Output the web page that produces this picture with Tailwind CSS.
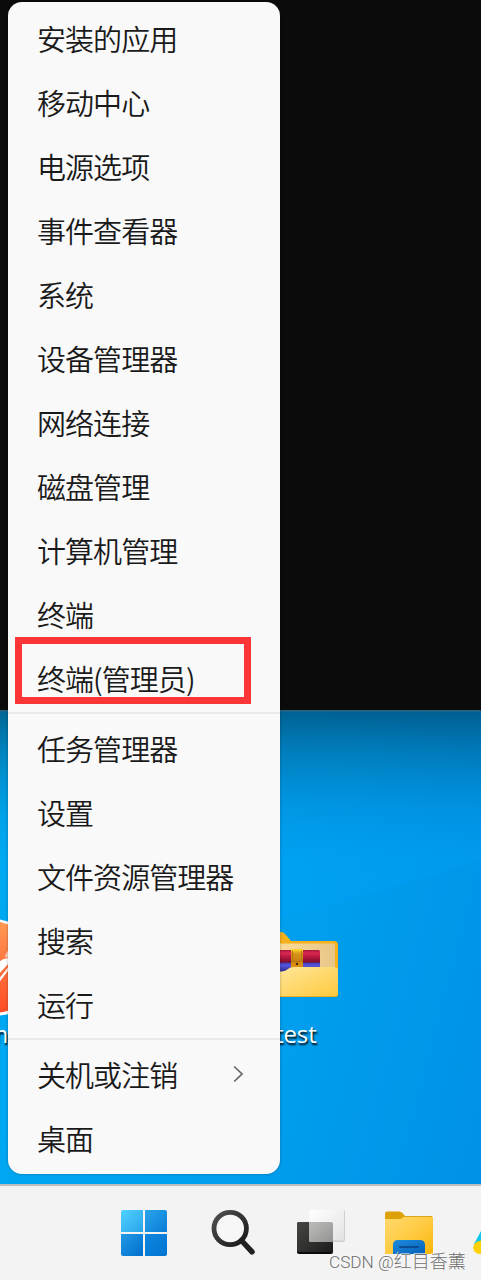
<!DOCTYPE html>
<html lang="zh-CN">
<head>
<meta charset="utf-8">
<title>桌面</title>
<script src="https://cdn.jsdelivr.net/npm/@tailwindcss/browser@4"></script>
</head>
<body class="relative flex h-[1280px] w-[481px] flex-col overflow-hidden bg-[#0b0b0b] font-['Open_Sans','Noto_Sans_CJK_SC',sans-serif]">
<div class="h-[710px] shrink-0 bg-[#0b0b0b]"></div>
<main class="relative h-[474px] shrink-0 overflow-hidden bg-linear-[105deg] from-[#00aaf3] via-[#009fee] via-60% to-[#0091e6]">
  <svg class="absolute inset-0" width="481" height="474" viewBox="0 0 481 474">
    <defs>
      <linearGradient id="shade" x1="0" y1="0" x2="0" y2="1"><stop stop-color="#002c43" stop-opacity=".55"/><stop offset=".28" stop-color="#003a54" stop-opacity=".33"/><stop offset=".65" stop-color="#00547c" stop-opacity=".12"/><stop offset="1" stop-color="#0078b0" stop-opacity="0"/></linearGradient>
      <linearGradient id="beam" x1="0" y1="0" x2="0" y2="1"><stop stop-color="#009cf4" stop-opacity=".2"/><stop offset="1" stop-color="#00a0f8" stop-opacity=".4"/></linearGradient>
      <linearGradient id="orange" x1="0" y1="0" x2="0" y2="1"><stop stop-color="#ff9b55"/><stop offset="1" stop-color="#ff4b25"/></linearGradient>
      <linearGradient id="fold" x1="0" y1="0" x2="1" y2="1"><stop stop-color="#ffe8a0"/><stop offset="1" stop-color="#ffc93c"/></linearGradient>
      <linearGradient id="back" x1="0" y1="0" x2="1" y2="0"><stop stop-color="#ffe09a"/><stop offset="1" stop-color="#e8c589"/></linearGradient>
      <linearGradient id="red" x1="0" y1="0" x2="0" y2="1"><stop stop-color="#a5163e"/><stop offset=".25" stop-color="#dc2950"/><stop offset=".55" stop-color="#b81840"/><stop offset="1" stop-color="#7c0b2b"/></linearGradient>
      <linearGradient id="violet" x1="0" y1="0" x2="0" y2="1"><stop stop-color="#3a2a8f"/><stop offset=".4" stop-color="#5555dd"/><stop offset="1" stop-color="#2c2a8a"/></linearGradient>
      <linearGradient id="gold" x1="0" y1="0" x2="0" y2="1"><stop stop-color="#ffdc2a"/><stop offset=".25" stop-color="#d9941c"/><stop offset=".6" stop-color="#c88212"/><stop offset="1" stop-color="#e9960c"/></linearGradient>
    </defs>
    <path d="M270 0H481V149Q380 184 270 210Z" fill="url(#beam)"/>
    <rect width="481" height="150" fill="url(#shade)"/>
    <rect width="481" height="2" fill="#1f6386"/>
    <path d="M-10 207Q-1 209 10 212V304Q0 305-10 308Z" fill="#fff"/>
    <path d="M-10 209Q0 212 10 215V300Q0 303-10 304Z" fill="url(#orange)"/>
    <path d="M-3 254Q2 248 10 248V252L-3 266ZM-2 270L10 255V258L-2 274Z" fill="#fff"/>
    <path d="M5 247Q6 242 9 240V248Z" fill="#ffd0b8"/>
    <path d="M270 222H281Q284 222 286 225L291 231H334Q338 231 338 235V280H270Z" fill="#f5b01c"/>
    <rect x="270" y="233.500" width="65" height="30" rx="1.500" fill="url(#back)"/>
    <rect x="270" y="251" width="50" height="11" fill="url(#violet)"/>
    <rect x="270" y="240" width="50" height="12.500" rx="1.500" fill="url(#red)"/>
    <rect x="291" y="239" width="12" height="19" fill="url(#gold)"/>
    <path d="M292.500 241V251M301.500 241V251M291 251.500H303" stroke="#b5780f" fill="none"/><circle cx="297" cy="254" r="1.200" fill="#472a08"/>
    <path d="M270 261.500H281Q285 261.500 288 259Q290 257 294 257H334Q338 257 338 260V284Q338 287 335 287H270Z" fill="url(#fold)"/>
    <path d="M270 286.500H335Q338 286.500 338 284" fill="none" stroke="#f0ab25"/>
  </svg>
  <span class="absolute -left-[14px] top-[308px] text-[24px] leading-[32px] text-white [text-shadow:1px_2px_2px_#000]">m</span>
  <span class="absolute left-[275px] top-[308px] text-[24px] leading-[32px] tracking-[-0.1px] text-white [text-shadow:1px_2px_2px_#000]">test</span>
</main>
<footer class="relative h-24 shrink-0 border-t-2 border-[#bdbdbd] bg-[#f3f3f3]">
  <svg width="481" height="94" viewBox="0 1186 481 94">
    <defs>
      <linearGradient id="win" x1="0" y1="0" x2="1" y2="1"><stop stop-color="#50d2ff"/><stop offset="1" stop-color="#28a4ea"/></linearGradient>
      <linearGradient id="win2" x1="0" y1="0" x2="1" y2="1"><stop stop-color="#2aa5eb"/><stop offset="1" stop-color="#0a7bd7"/></linearGradient>
      <linearGradient id="win3" x1="0" y1="0" x2="1" y2="1"><stop stop-color="#2299e4"/><stop offset="1" stop-color="#006fce"/></linearGradient>
      <linearGradient id="win4" x1="0" y1="0" x2="1" y2="1"><stop stop-color="#1086dd"/><stop offset="1" stop-color="#0074d2"/></linearGradient>
      <linearGradient id="lens" x1="0" y1="0" x2="1" y2="1"><stop stop-color="#505050"/><stop offset="1" stop-color="#181818"/></linearGradient>
      <linearGradient id="dark" x1="0" y1="0" x2="1" y2="1"><stop stop-color="#464644"/><stop offset="1" stop-color="#1d1d1d"/></linearGradient>
      <linearGradient id="light" x1="0" y1="0" x2="1" y2="1"><stop stop-color="#fff"/><stop offset="1" stop-color="#e2e2e2"/></linearGradient>
      <linearGradient id="mix" x1="0" y1="0" x2="1" y2="1"><stop stop-color="#bdbdbb"/><stop offset="1" stop-color="#929292"/></linearGradient>
      <linearGradient id="yellow" x1="0" y1="0" x2="1" y2="1"><stop stop-color="#ffdb70"/><stop offset=".5" stop-color="#ffcb43"/><stop offset="1" stop-color="#f9b60b"/></linearGradient>
      <linearGradient id="blue" x1="0" y1="0" x2="1" y2="1"><stop stop-color="#1d8bdd"/><stop offset="1" stop-color="#0561b8"/></linearGradient>
    </defs>
    <path d="M123 1210H143V1232H121V1212Q121 1210 123 1210Z" fill="url(#win)"/>
    <path d="M145 1210H165Q167 1210 167 1212V1232H145Z" fill="url(#win2)"/>
    <path d="M121 1234H143V1256H123Q121 1256 121 1254Z" fill="url(#win3)"/>
    <path d="M145 1234H167V1254Q167 1256 165 1256H145Z" fill="url(#win4)"/>
    <circle cx="230.200" cy="1228.500" r="16.200" fill="#f7f7f7" stroke="url(#lens)" stroke-width="4.800"/>
    <path d="M241.500 1240.500L252 1251.800" stroke="#202020" stroke-width="5.500" stroke-linecap="round"/>
    <rect x="297" y="1222" width="36" height="32" rx="2" fill="#0a0a0a"/>
    <rect x="297" y="1222" width="36" height="30" rx="2" fill="url(#dark)"/>
    <rect x="309" y="1210" width="36" height="32" rx="2" fill="#cfcfcf"/>
    <rect x="309" y="1210" width="35" height="30.500" rx="1.500" fill="url(#light)"/>
    <path d="M309 1222H331Q333 1222 333 1224V1242H311Q309 1242 309 1240Z" fill="url(#mix)"/>
    <path d="M385 1213.500Q385 1211.500 387 1211.500H399Q401 1211.500 402.500 1213L405 1216V1222H385Z" fill="#dda006"/>
    <path d="M385 1219H399Q401 1219 403 1217.500L404 1216.500Q405 1216 407 1216H431Q433 1216 433 1218V1254H385Z" fill="url(#yellow)"/>
    <path d="M404 1216.500H432" stroke="#dda51a"/>
    <path d="M393 1254V1245Q393 1240 398 1240H420Q425 1240 425 1245V1254Z" fill="url(#blue)"/>
    <path d="M400 1247H418" stroke="#0b4c94" stroke-width="2" stroke-linecap="round"/>
    <path d="M481 1231L474 1244L478 1250H481Z" fill="#10c5ec"/>
    <path d="M481 1240.500Q473 1242 473 1248Q474 1254 481 1254Z" fill="#ffd00a"/>
  </svg>
  <span class="absolute left-[329px] top-[64px] whitespace-nowrap font-['Roboto','Noto_Sans_CJK_SC',sans-serif] text-[17.200px] font-light leading-6 text-[#6f6f6f] [text-shadow:-1px_-1px_0_#ffffffaa]">CSDN @<span class="text-[18px]">红目香薰</span></span>
</footer>

<nav class="absolute left-2 top-[2px] flex h-[1172px] w-[272px] flex-col rounded-[14px] bg-[#f9f9f9] pt-[4px] font-['Noto_Sans_CJK_SC',sans-serif] text-[29px] font-[350] leading-[64px] tracking-[-0.95px] text-[#1a1a1a] shadow-[0_0_3px_#00000050] *:shrink-0">
  <div class="h-16 pl-[29px]">安装的应用</div>
  <div class="h-16 pl-[29px]">移动中心</div>
  <div class="h-16 pl-[29px]">电源选项</div>
  <div class="h-16 pl-[29px]">事件查看器</div>
  <div class="h-16 pl-[29px]">系统</div>
  <div class="h-16 pl-[29px]">设备管理器</div>
  <div class="h-16 pl-[29px]">网络连接</div>
  <div class="h-16 pl-[29px]">磁盘管理</div>
  <div class="h-16 pl-[29px]">计算机管理</div>
  <div class="h-16 pl-[29px]">终端</div>
  <div class="relative h-16 pl-[29px]">终端(管理员)
    <span class="absolute -top-[9px] left-[7px] h-[67px] w-[236px] border-[7px] border-[#fc3636]"></span>
  </div>
  <div class="mb-0.5 mt-0.5 h-[2px] bg-[#e9e9e9]"></div>
  <div class="h-16 pl-[29px]">任务管理器</div>
  <div class="h-16 pl-[29px]">设置</div>
  <div class="h-16 pl-[29px]">文件资源管理器</div>
  <div class="h-16 pl-[29px]">搜索</div>
  <div class="h-16 pl-[29px]">运行</div>
  <div class="mb-0.5 mt-0.5 h-[2px] bg-[#e9e9e9]"></div>
  <div class="flex h-16 items-center justify-between pl-[29px] pr-[36px]">关机或注销
    <svg width="11" height="18" viewBox="0 0 11 18" fill="none" stroke="#666" stroke-width="1.700"><path d="M1.200 1.500L9 9L1.200 16.500"/></svg>
  </div>
  <div class="h-16 pl-[29px]">桌面</div>
</nav>
</body>
</html>
